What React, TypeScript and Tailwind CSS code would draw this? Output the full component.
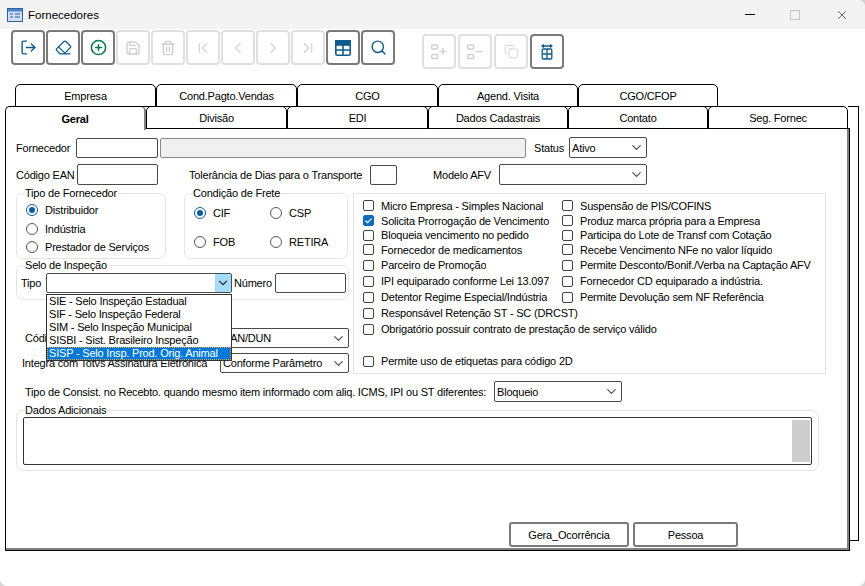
import { ChevronDown, ChevronFirst, ChevronLast, ChevronLeft, ChevronRight, CirclePlus, Copy, Eraser, LogOut, Save, Search, Trash2, X } from "lucide-react";
import type { ReactNode } from "react";

const BLUE = "#0f5c8c";
const OFF = "#cfcfcf";

const TableIcon = () => (
  <svg width="16" height="16" viewBox="0 0 16 16" fill="none" stroke={BLUE} strokeWidth="1.6">
    <rect x="0.8" y="0.8" width="14.4" height="14.4" rx="1.5" />
    <rect x="0.8" y="0.8" width="14.4" height="4.2" fill={BLUE} />
    <path d="M1 10h14M8 5v10" />
  </svg>
);

const ListPlusIcon = () => (
  <svg width="16" height="16" viewBox="0 0 16 16" fill="none" stroke={OFF} strokeWidth="1.4">
    <rect x="0.7" y="1" width="6" height="4" rx="1" />
    <rect x="0.7" y="10.5" width="6" height="4" rx="1" />
    <path d="M8.5 7.5h7M12 4v7" />
  </svg>
);

const ListMinusIcon = () => (
  <svg width="16" height="16" viewBox="0 0 16 16" fill="none" stroke={OFF} strokeWidth="1.4">
    <rect x="0.7" y="1" width="6" height="4" rx="1" />
    <rect x="0.7" y="10.5" width="6" height="4" rx="1" />
    <path d="M8.5 7.5h7" />
  </svg>
);

const ColumnWidthIcon = () => (
  <svg width="12" height="16" viewBox="0 0 12 16" fill="none" stroke={BLUE} strokeWidth="1.3">
    <path d="M1 2h10M3 0.5L1 2l2 1.5M9 0.5L11 2L9 3.500" />
    <rect x="1.2" y="5" width="9.600" height="10" rx="1" />
    <path d="M1 10h10M6 5v10" />
  </svg>
);

const ToolButton = ({ children, off }: { children: ReactNode; off?: boolean }) => (
  <button
    className={`flex h-[35px] w-[34px] items-center justify-center rounded-[4px] border-2 bg-white ${
      off ? "border-[#e0e0e0]" : "border-[#7a7a7a]"
    }`}
  >
    {children}
  </button>
);

const Tab = ({ label, active, wide }: { label: string; active?: boolean; wide?: boolean }) => (
  <div
    className={`relative z-10 flex h-[23px] items-center justify-center rounded-t-[5px] border border-black bg-white text-[11px] tracking-[-0.2px] text-black ${
      wide ? "w-[141px]" : "w-[140px]"
    } ${active ? "h-[24px] border-b-0 border-r-2 border-r-[#808080] font-bold" : ""}`}
  >
    {label}
  </div>
);

const Field = ({ className }: { className: string }) => (
  <input readOnly className={`rounded-[2px] border border-[#4a4a4a] bg-white outline-none ${className}`} />
);

const Select = ({ value, className }: { value?: string; className: string }) => (
  <div className={`flex items-center justify-between rounded-[2px] border border-[#4a4a4a] bg-white pl-[2px] pr-[2px] ${className}`}>
    <span className="whitespace-nowrap">{value}</span>
    <ChevronDown size={15} color="#555" strokeWidth={2} />
  </div>
);

const Radio = ({ label, checked, className }: { label: string; checked?: boolean; className?: string }) => (
  <div className={`flex items-center ${className ?? ""}`}>
    <span className={`flex h-[12px] w-[12px] shrink-0 items-center justify-center rounded-full border ${checked ? "border-[#0f5c9c]" : "border-[#555]"}`}>
      {checked && <span className="h-[6px] w-[6px] rounded-full bg-[#0f5c9c]" />}
    </span>
    <span className="ml-[7px] whitespace-nowrap">{label}</span>
  </div>
);

const Check = ({ label, checked, className }: { label: string; checked?: boolean; className: string }) => (
  <div className={`flex shrink-0 items-center ${className}`}>
    <span className={`flex h-[11px] w-[11px] shrink-0 items-center justify-center rounded-[2px] border ${checked ? "border-[#0f6cbd] bg-[#0f6cbd]" : "border-[#444]"}`}>
      {checked && (
        <svg width="9" height="9" viewBox="0 0 9 9" fill="none" stroke="#fff" strokeWidth="1.3">
          <path d="M1.5 4.800l2 1.800 4-4" />
        </svg>
      )}
    </span>
    <span className="ml-[7px] overflow-hidden whitespace-nowrap">{label}</span>
  </div>
);

const Group = ({ title, className, children }: { title: string; className: string; children: ReactNode }) => (
  <fieldset className={`rounded-[7px] border border-[#e4e4e4] ${className}`}>
    <legend className="ml-[7px] px-[1px] leading-[14px]">{title}</legend>
    {children}
  </fieldset>
);

const flagRows = [
  { h: "h-[15px]", w: "w-[199px]", a: "Micro Empresa - Simples Nacional", b: "Suspensão de PIS/COFINS" },
  { h: "h-[15px]", w: "w-[199px]", a: "Solicita Prorrogação de Vencimento", b: "Produz marca própria para a Empresa", checked: true },
  { h: "h-[14px]", w: "w-[199px]", a: "Bloqueia vencimento no pedido", b: "Participa do Lote de Transf com Cotação" },
  { h: "h-[15px]", w: "w-[199px]", a: "Fornecedor de medicamentos", b: "Recebe Vencimento NFe no valor líquido" },
  { h: "h-[16px]", w: "w-[199px]", a: "Parceiro de Promoção", b: "Permite Desconto/Bonif./Verba na Captação AFV" },
  { h: "h-[16px]", w: "w-[199px]", a: "IPI equiparado conforme Lei 13.097", b: "Fornecedor CD equiparado a indústria." },
  { h: "h-[16px]", w: "mr-[15px] w-[184px]", a: "Detentor Regime Especial/Indústria", b: "Permite Devolução sem NF Referência" },
  { h: "h-[16px]", w: "w-[460px]", a: "Responsável Retenção ST - SC (DRCST)" },
  { h: "h-[16px]", w: "w-[460px]", a: "Obrigatório possuir contrato de prestação de serviço válido" },
  { h: "mt-[16px] h-[16px]", w: "w-[460px]", a: "Permite uso de etiquetas para código 2D" },
];

const selos = [
  "SIE - Selo Inspeção Estadual",
  "SIF - Selo Inspeção Federal",
  "SIM - Selo Inspeção Municipal",
  "SISBI - Sist. Brasileiro Inspeção",
];

export default function App() {
  return (
    <div className="h-[586px] w-[865px] overflow-hidden bg-[#d4d4d4]">
      <div className="h-[586px] w-[865px] overflow-hidden rounded-b-[7px] rounded-tr-[7px] bg-white text-[11px] leading-[14px] tracking-[-0.2px] text-black [font-family:'Liberation_Sans',sans-serif]">
        {/* Title bar */}
        <div className="flex h-[29px] items-center bg-[#f3f3f3] pl-[7px]">
          <svg width="16" height="14" viewBox="0 0 16 14">
            <rect x="0.5" y="0.5" width="15" height="13" fill="#cfe0f5" stroke="#2f5f9e" />
            <rect x="1" y="1" width="14" height="2.5" fill="#4c86c9" />
            <path d="M3 6h3M3 9h3M8 6h5M8 9h5" stroke="#2f5f9e" />
          </svg>
          <span className="ml-[5px] text-[11.5px] tracking-normal text-black">Fornecedores</span>
          <div className="ml-auto flex items-center">
            <span className="h-px w-[10px] bg-black" />
            <span className="ml-[35px] h-[10px] w-[10px] border border-[#c4c4c4]" />
            <X size={14} strokeWidth={1} className="ml-[35px] mr-[16px] text-black" />
          </div>
        </div>

        {/* Toolbar */}
        <div className="ml-[11px] flex h-[55px] items-start">
          <div className="mt-[1px] flex gap-px">
            <ToolButton><LogOut size={17} color={BLUE} strokeWidth={2} /></ToolButton>
            <ToolButton><Eraser size={17} color={BLUE} strokeWidth={1.8} /></ToolButton>
            <ToolButton><CirclePlus size={17} color="#0b7a4b" strokeWidth={2.2} /></ToolButton>
            <ToolButton off><Save size={16} color={OFF} strokeWidth={2} /></ToolButton>
            <ToolButton off><Trash2 size={16} color={OFF} strokeWidth={2} /></ToolButton>
            <ToolButton off><ChevronFirst size={18} color={OFF} strokeWidth={1.5} /></ToolButton>
            <ToolButton off><ChevronLeft size={18} color={OFF} strokeWidth={1.5} /></ToolButton>
            <ToolButton off><ChevronRight size={18} color={OFF} strokeWidth={1.5} /></ToolButton>
            <ToolButton off><ChevronLast size={18} color={OFF} strokeWidth={1.5} /></ToolButton>
            <ToolButton><TableIcon /></ToolButton>
            <ToolButton><Search size={17} color={BLUE} strokeWidth={2} /></ToolButton>
          </div>
          <div className="ml-[27px] mt-[5px] flex gap-[2px]">
            <ToolButton off><ListPlusIcon /></ToolButton>
            <ToolButton off><ListMinusIcon /></ToolButton>
            <ToolButton off><Copy size={15} color={OFF} strokeWidth={1.5} /></ToolButton>
            <ToolButton><ColumnWidthIcon /></ToolButton>
          </div>
        </div>

        {/* Back row of tabs */}
        <div className="ml-[15px] flex h-[22px]">
          {["Empresa", "Cond.Pagto.Vendas", "CGO", "Agend. Visita", "CGO/CFOP"].map((t, i) => (
            <Tab key={t} label={t} wide={i < 3} />
          ))}
        </div>

        {/* Back panel with the front tabs and page inside */}
        <div className="ml-[5px] h-[435px] w-[854px] border-b border-r border-black">
          <div className="flex h-[22px]">
            <Tab label="Geral" active wide />
            <Tab label="Divisão" wide />
            <Tab label="EDI" wide />
            <Tab label="Dados Cadastrais" />
            <Tab label="Contato" />
            <Tab label="Seg. Fornec" />
            <div className="flex-1 border-t border-black" />
          </div>

          <div className="h-[423px] w-[845px] border border-black bg-white">
            <div className="h-[421px] border-b-2 border-r-2 border-[#808080] pl-[10px] pt-[8px]">
              {/* Fornecedor row */}
              <div className="flex h-[21px] items-center">
                <span className="w-[60px] whitespace-nowrap">Fornecedor</span>
                <Field className="h-[20px] w-[82px]" />
                <input readOnly className="ml-[2px] h-[20px] w-[366px] rounded-[2px] border border-[#8a8a8a] bg-[#f0f0f0] outline-none" />
                <span className="ml-[8px] w-[35px]">Status</span>
                <Select value="Ativo" className="h-[21px] w-[78px]" />
              </div>

              {/* EAN row */}
              <div className="mt-[6px] flex h-[21px] items-center">
                <span className="w-[61px] whitespace-nowrap">Código EAN</span>
                <Field className="h-[21px] w-[81px]" />
                <span className="ml-[31px] w-[181px] whitespace-nowrap">Tolerância de Dias para o Transporte</span>
                <Field className="h-[20px] w-[27px]" />
                <span className="ml-[36px] w-[66px]">Modelo AFV</span>
                <Select className="h-[21px] w-[148px]" />
              </div>

              <div className="flex">
                {/* Left column */}
                <div className="mt-px w-[337px]">
                  <div className="flex">
                    <Group title="Tipo de Fornecedor" className="h-[73px] w-[150px]">
                      <div className="mt-[3px] flex flex-col gap-[5px] pl-[9px]">
                        <Radio label="Distribuidor" checked />
                        <Radio label="Indústria" />
                        <Radio label="Prestador de Serviços" className="-mt-px" />
                      </div>
                    </Group>
                    <Group title="Condição de Frete" className="ml-[18px] h-[73px] w-[164px]">
                      <div className="mt-[6px] grid grid-cols-[76px_1fr] gap-y-[15px] pl-[9px]">
                        <Radio label="CIF" checked />
                        <Radio label="CSP" />
                        <Radio label="FOB" />
                        <Radio label="RETIRA" />
                      </div>
                    </Group>
                  </div>

                  <Group title="Selo de Inspeção" className="mt-[-1px] h-[42px] w-[333px]">
                    <div className="flex items-center pl-[4px] pt-[1px]">
                      <span className="w-[25px]">Tipo</span>
                      <div className="relative h-[20px] w-[186px]">
                        <div className="flex h-[20px] items-stretch justify-end rounded-[2px] border border-[#4a4a4a] bg-white">
                          <span className="flex w-[16px] items-center justify-center bg-[#a5dcfb]">
                            <ChevronDown size={14} color="#333" strokeWidth={2} />
                          </span>
                        </div>
                        {/* Open list lies over the rows below */}
                        <div className="absolute left-0 top-[21px] z-20 w-[186px] border border-[#333] bg-white">
                          {selos.map((s) => (
                            <div key={s} className="h-[13px] whitespace-nowrap pl-[2px] leading-[13px]">{s}</div>
                          ))}
                          <div className="h-[13px] whitespace-nowrap border border-dotted border-[#e8a33c] bg-[#0078d7] pl-[1px] leading-[11px] text-white">
                            SISP - Selo Insp. Prod. Orig. Animal
                          </div>
                        </div>
                      </div>
                      <span className="ml-[2px] w-[41px]">Número</span>
                      <Field className="h-[20px] w-[71px]" />
                    </div>
                  </Group>

                  <div className="mt-[28px] flex h-[20px] items-center pl-[9px]">
                    <span className="w-[195px]">Código de Barras</span>
                    <Select value="EAN/DUN" className="h-[20px] w-[129px]" />
                  </div>
                  <div className="mt-[5px] flex h-[20px] items-center pl-[6px]">
                    <span className="w-[198px] whitespace-nowrap">Integra com Totvs Assinatura Eletrônica</span>
                    <Select value="Conforme Parâmetro" className="h-[20px] w-[129px]" />
                  </div>
                </div>

                {/* Flags */}
                <div className="mt-[8px] h-[181px] w-[473px] border border-[#e4e4e4] pl-[9px] pt-[4px]">
                  {flagRows.map((r) => (
                    <div key={r.a} className={`flex items-center ${r.h}`}>
                      <Check label={r.a} checked={r.checked} className={r.w} />
                      {r.b && <Check label={r.b} className="w-[262px]" />}
                    </div>
                  ))}
                </div>
              </div>

              {/* Consist row */}
              <div className="mt-[7px] flex h-[21px] items-center pl-[9px]">
                <span className="w-[469px] whitespace-nowrap">Tipo de Consist. no Recebto. quando mesmo item informado com aliq. ICMS, IPI ou ST diferentes:</span>
                <Select value="Bloqueio" className="h-[21px] w-[128px]" />
              </div>

              {/* Dados Adicionais */}
              <Group title="Dados Adicionais" className="mt-px h-[68px] w-[803px]">
                <div className="mx-[6px] flex h-[48px] justify-end rounded-[2px] border border-[#333] bg-white py-[2px] pr-[1px]">
                  <div className="w-[18px] bg-[#cdcdcd]" />
                </div>
              </Group>

              {/* Actions */}
              <div className="ml-[493px] mt-[51px] flex gap-[4px]">
                <button className="h-[25px] w-[120px] rounded-[3px] border-2 border-[#7a7a7a] bg-white">Gera_Ocorrência</button>
                <button className="h-[25px] w-[105px] rounded-[3px] border-2 border-[#7a7a7a] bg-white">Pessoa</button>
              </div>
            </div>
          </div>
        </div>
      </div>
    </div>
  );
}
